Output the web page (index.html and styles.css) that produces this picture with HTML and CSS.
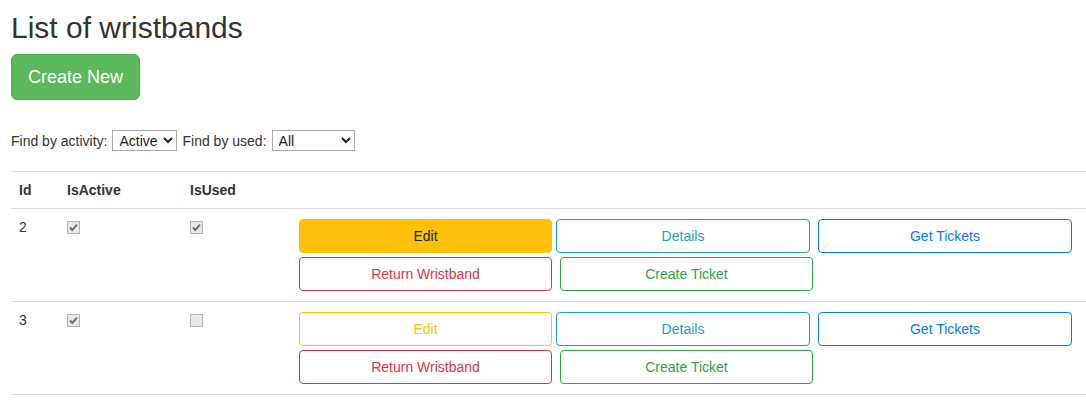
FILE: index.html
```html
<!DOCTYPE html>
<html lang="en">
<head>
<meta charset="utf-8">
<title>List of wristbands</title>
<link rel="stylesheet" href="styles.css">
</head>
<body>
<main class="page">
  <h2 class="title">List of wristbands</h2>
  <a class="btn-create" href="#">Create New</a>

  <form class="filters">
    <label for="activity">Find by activity:</label>
    <select id="activity" class="sel sel-activity">
      <option>Active</option>
      <option>All</option>
    </select>
    <label for="used">Find by used:</label>
    <select id="used" class="sel sel-used">
      <option>All</option>
      <option>Used</option>
      <option>Unused</option>
    </select>
  </form>

  <table class="table">
    <thead>
      <tr>
        <th class="col-id">Id</th>
        <th class="col-active">IsActive</th>
        <th class="col-used">IsUsed</th>
        <th class="col-actions"></th>
      </tr>
    </thead>
    <tbody>
      <tr>
        <td>2</td>
        <td><input type="checkbox" class="chk" checked disabled></td>
        <td><input type="checkbox" class="chk" checked disabled></td>
        <td>
          <div class="actions">
            <div class="btn-row">
              <a href="#" class="btn btn-warning">Edit</a>
              <a href="#" class="btn btn-outline-info gap-s">Details</a>
              <a href="#" class="btn btn-outline-primary gap-l">Get Tickets</a>
            </div>
            <div class="btn-row">
              <a href="#" class="btn btn-outline-danger">Return Wristband</a>
              <a href="#" class="btn btn-outline-success gap-m">Create Ticket</a>
            </div>
          </div>
        </td>
      </tr>
      <tr>
        <td>3</td>
        <td><input type="checkbox" class="chk" checked disabled></td>
        <td><input type="checkbox" class="chk" disabled></td>
        <td>
          <div class="actions">
            <div class="btn-row">
              <a href="#" class="btn btn-outline-warning">Edit</a>
              <a href="#" class="btn btn-outline-info gap-s">Details</a>
              <a href="#" class="btn btn-outline-primary gap-l">Get Tickets</a>
            </div>
            <div class="btn-row">
              <a href="#" class="btn btn-outline-danger">Return Wristband</a>
              <a href="#" class="btn btn-outline-success gap-m">Create Ticket</a>
            </div>
          </div>
        </td>
      </tr>
    </tbody>
  </table>
</main>
</body>
</html>
```

FILE: styles.css
```css
* { box-sizing: border-box; }

html, body {
  margin: 0;
  padding: 0;
  background: #fff;
}

body {
  font-family: "Liberation Sans", Arial, Helvetica, sans-serif;
  font-size: 14px;
  line-height: 20px;
  color: #333;
  overflow: hidden;
}

.page {
  padding: 0 0 0 11px;
}

.title {
  margin: 0 0 10px 0;
  padding-top: 11px;
  font-size: 30px;
  font-weight: 400;
  line-height: 33px;
  color: #333;
}

.btn-create {
  display: inline-block;
  padding: 10px 16px;
  font-size: 18px;
  line-height: 24px;
  color: #fff;
  background: #5cb85c;
  border: 1px solid #4cae4c;
  border-radius: 6px;
  text-decoration: none;
}

.filters {
  display: flex;
  align-items: center;
  gap: 5px;
  margin-top: 30px;
  height: 21px;
}

.sel {
  height: 21px;
  font-family: "Liberation Sans", Arial, sans-serif;
  font-size: 14px;
  color: #222;
  background: #fff;
  border: 1px solid #a9a9a9;
  border-radius: 0;
  padding: 0 2px;
}

.sel-activity { width: 65px; }
.sel-used { width: 83px; }

.table {
  margin-top: 20px;
  width: 1090px;
  border-collapse: collapse;
}

.table th,
.table td {
  padding: 8px;
  text-align: left;
  vertical-align: top;
  border-top: 1px solid #ddd;
  line-height: 20px;
}

.table th {
  font-weight: 700;
  border-bottom: 1px solid #ddd;
}

.table tbody tr:last-child td {
  border-bottom: 1px solid #ddd;
}

.col-id { width: 48px; }
.col-active { width: 123px; }
.col-used { width: 109px; }

.chk {
  -webkit-appearance: none;
  appearance: none;
  display: block;
  width: 13px;
  height: 13px;
  margin: 4px 0 0 0;
  border: 1px solid #b5b5b5;
  border-radius: 0;
  background-color: #e8e8e8;
}

.chk:checked {
  background-image: url("data:image/svg+xml;utf8,<svg xmlns='http://www.w3.org/2000/svg' width='11' height='11' viewBox='0 0 11 11'><path d='M2 5.5 L4.3 8 L9 2.6' fill='none' stroke='%23707070' stroke-width='2'/></svg>");
  background-repeat: no-repeat;
  background-position: center;
}

.actions {
  display: flex;
  flex-direction: column;
  gap: 4px;
  padding: 2px 0;
}

.btn-row {
  display: flex;
}

.btn {
  display: block;
  width: 253px;
  height: 34px;
  padding: 6px 12px;
  font-size: 14px;
  line-height: 20px;
  text-align: center;
  text-decoration: none;
  border: 1px solid transparent;
  border-radius: 4px;
  background: #fff;
}

.gap-s { margin-left: 4px; width: 254px; }
.gap-m { margin-left: 8px; }
.gap-l { margin-left: 8px; width: 254px; }

.btn-warning {
  background: #ffc107;
  border-color: #ffc107;
  color: #212529;
}

.btn-outline-warning { color: #ffc107; border-color: #ffc107; }
.btn-outline-info { color: #17a2b8; border-color: #17a2b8; }
.btn-outline-primary { color: #007bff; border-color: #007bff; }
.btn-outline-danger { color: #dc3545; border-color: #dc3545; }
.btn-outline-success { color: #28a745; border-color: #28a745; }
```
